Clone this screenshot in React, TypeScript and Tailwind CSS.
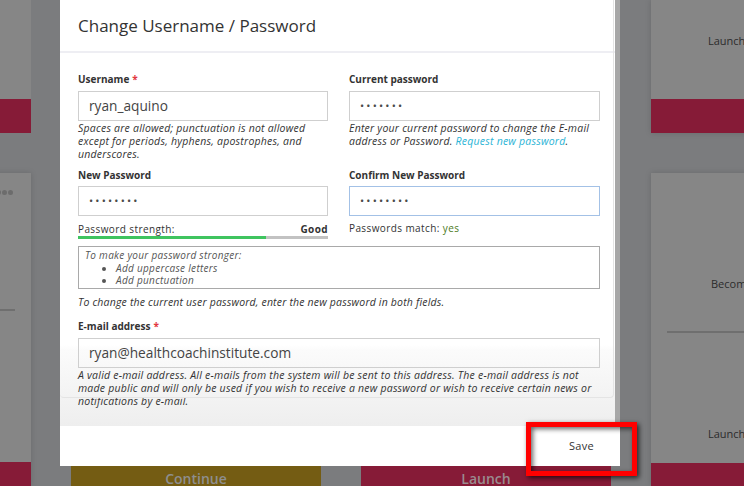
import React from "react";

const dots = (n: number) => "•".repeat(n);

function Field({
  label,
  required,
  children,
}: {
  label: string;
  required?: boolean;
  children: React.ReactNode;
}) {
  return (
    <div className="flex flex-col">
      <label className="text-[10px] font-bold leading-[13px] text-[#333]">
        {label}
        {required && <span className="ml-[3px] text-[#e2383f]">*</span>}
      </label>
      {children}
    </div>
  );
}

function Input({
  value,
  secret,
  focused,
}: {
  value: string;
  secret?: boolean;
  focused?: boolean;
}) {
  return (
    <div
      className={`mt-[5px] flex h-[30px] items-center border px-[10px] ${
        focused ? "border-[#a3c1e6]" : "border-[#cfcfcf]"
      }`}
    >
      {secret ? (
        <span className="text-[11px] tracking-[2.2px] text-[#4a4a4a]">{value}</span>
      ) : (
        <span className="text-[13.7px] text-[#444]">{value}</span>
      )}
    </div>
  );
}

function Help({ children }: { children: React.ReactNode }) {
  return (
    <p className="mt-[1px] whitespace-nowrap text-[10.5px] italic leading-[13px] tracking-[0.22px] text-[#333]">
      {children}
    </p>
  );
}

function Background() {
  return (
    <div className="-ml-[219px] flex h-full gap-[40px]">
      {/* left column */}
      <div className="flex w-[250px] shrink-0 flex-col gap-[40px]">
        <div className="flex h-[133px] flex-col bg-[#868686]">
          <div className="flex-1" />
          <div className="h-[34px] bg-[#861b37]" />
        </div>
        <div className="flex flex-1 flex-col bg-[#868686] shadow-[0_0_6px_rgba(0,0,0,0.15)]">
          <div className="flex justify-end gap-[1px] pr-[18px] pt-[17px]">
            <span className="h-[5px] w-[5px] rounded-full bg-[#6c6c6c]" />
            <span className="h-[5px] w-[5px] rounded-full bg-[#6c6c6c]" />
            <span className="h-[5px] w-[5px] rounded-full bg-[#6c6c6c]" />
          </div>
          <div className="mx-[16px] mt-[114px] h-[2px] bg-[#6f6f6f]" />
          <div className="flex-1" />
          <div className="h-[24px] bg-[#861b37]" />
        </div>
      </div>
      {/* middle column 1 */}
      <div className="flex w-[250px] shrink-0 flex-col justify-end">
        <div className="flex h-[20px] justify-center bg-[#745c13] pt-[3px] text-[14px] font-semibold leading-[20px] text-[#8e8e8e]">
          Continue
        </div>
      </div>
      {/* middle column 2 */}
      <div className="flex w-[250px] shrink-0 flex-col justify-end">
        <div className="flex h-[20px] justify-center bg-[#861b37] pt-[3px] text-[14px] font-semibold leading-[20px] text-[#9a8b8f]">
          Launch
        </div>
      </div>
      {/* right column */}
      <div className="flex w-[250px] shrink-0 flex-col gap-[40px]">
        <div className="flex h-[133px] flex-col bg-[#868686] shadow-[0_0_6px_rgba(0,0,0,0.15)]">
          <div className="flex-1 pl-[57px] pt-[33px] text-[11px] text-[#2c2c2c]">
            Launch Your Practice
          </div>
          <div className="h-[34px] bg-[#861b37]" />
        </div>
        <div className="flex flex-1 flex-col bg-[#868686] shadow-[0_0_6px_rgba(0,0,0,0.15)]">
          <div className="pl-[60px] pt-[104px] text-[11px] leading-[14px] text-[#2c2c2c]">
            Become a Coach
          </div>
          <div className="ml-[16px] mr-[16px] mt-[40px] h-[2px] bg-[#6f6f6f]" />
          <div className="pl-[57px] pt-[94px] text-[11px] leading-[14px] text-[#2c2c2c]">
            Launch Your Practice
          </div>
          <div className="flex-1" />
          <div className="h-[23px] bg-[#861b37]" />
        </div>
      </div>
    </div>
  );
}

function Modal() {
  return (
    <div className="absolute left-[60px] top-0 flex h-[466px] w-[560px] flex-col bg-white">
      <div className="flex h-[426px]">
        <div className="relative flex w-[555px] flex-col bg-[linear-gradient(to_bottom,#ffffff_0px,#ffffff_345px,#fbfbfb_350px,#eeeeee_100%)]">
          <div className="flex h-[53px] items-center border-b-2 border-[#eeeef3] pl-[18px] text-[17px] text-[#333]">
            Change Username / Password
          </div>
          <div className="flex flex-col pl-[18px] pr-[15px] pt-[20px]">
            <div className="grid grid-cols-[250px_251px] gap-x-[21px] gap-y-[8px]">
              <Field label="Username" required>
                <Input value="ryan_aquino" />
                <Help>
                  Spaces are allowed; punctuation is not allowed
                  <br />
                  except for periods, hyphens, apostrophes, and
                  <br />
                  underscores.
                </Help>
              </Field>
              <Field label="Current password">
                <Input value={dots(7)} secret />
                <Help>
                  Enter your current password to change the E-mail
                  <br />
                  address or Password.{" "}
                  <span className="text-[#2ab4d6]">Request new password</span>.
                </Help>
              </Field>
              <Field label="New Password">
                <div className="-mt-px">
                  <Input value={dots(8)} secret />
                </div>
                <div className="mt-[6px] flex justify-between text-[10px] leading-[14px] tracking-[0.4px] text-[#333]">
                  <span>Password strength:</span>
                  <span className="font-bold">Good</span>
                </div>
                <div className="flex h-[3px] bg-[#c2c2c2]">
                  <div className="w-[75%] bg-[#3fc45f]" />
                </div>
              </Field>
              <Field label="Confirm New Password">
                <div className="-mt-px">
                  <Input value={dots(8)} secret focused />
                </div>
                <div className="mt-[5px] text-[10px] leading-[14px] tracking-[0.4px] text-[#333]">
                  Passwords match: <span className="text-[#4d7a22]">yes</span>
                </div>
              </Field>
            </div>
            <div className="mt-[7px] h-[43px] border border-[#a9a9a9] pl-[6px] pt-[2px] text-[10px] italic leading-[12.5px] tracking-[0.3px] text-[#555]">
              <div>To make your password stronger:</div>
              <ul className="ml-[17px] list-disc pl-[14px]">
                <li>Add uppercase letters</li>
                <li>Add punctuation</li>
              </ul>
            </div>
            <p className="mt-[7px] whitespace-nowrap text-[10.5px] italic leading-[13px] tracking-[0.18px] text-[#333]">
              To change the current user password, enter the new password in both fields.
            </p>
            <div className="mt-[11px]">
              <Field label="E-mail address" required>
                <Input value="ryan@healthcoachinstitute.com" />
                <Help>
                  A valid e-mail address. All e-mails from the system will be sent to this
                  address. The e-mail address is not
                  <br />
                  made public and will only be used if you wish to receive a new password or
                  wish to receive certain news or
                  <br />
                  notifications by e-mail.
                </Help>
              </Field>
            </div>
          </div>
          <div className="pointer-events-none absolute left-0 right-[1px] top-0 h-[398px] rounded-b-[4px] border-b border-r border-[#e4e4e4]" />
        </div>
        <div className="w-[5px] bg-[#a7a7a7]" />
      </div>
      <div className="flex h-[40px] items-center justify-end pr-[26px]">
        <span className="text-[11px] tracking-[0.3px] text-[#333]">Save</span>
      </div>
    </div>
  );
}

export default function App() {
  return (
    <div className="relative h-[486px] w-[744px] overflow-hidden bg-[#7b7c7e] font-['Open_Sans',sans-serif]">
      <Background />
      <Modal />
      <div className="pointer-events-none absolute left-[526px] top-[422px] h-[54px] w-[111px] border-[5px] border-[#f00] shadow-[2px_2px_5px_rgba(0,0,0,0.7),inset_2px_2px_5px_rgba(0,0,0,0.6)]" />
    </div>
  );
}
